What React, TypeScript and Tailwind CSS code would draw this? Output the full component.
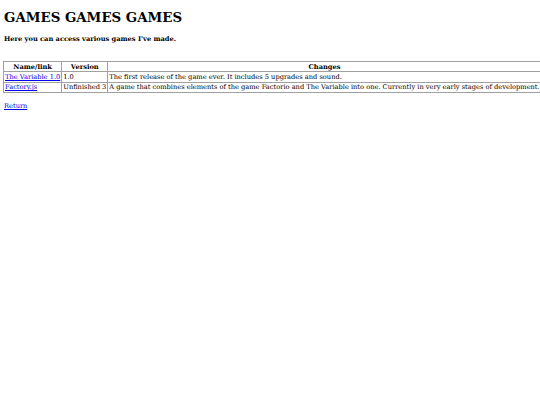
const rows = [
  {
    name: "The Variable 1.0",
    version: "1.0",
    changes: "The first release of the game ever. It includes 5 upgrades and sound.",
  },
  {
    name: "Factory.js",
    version: "Unfinished 3",
    changes:
      "A game that combines elements of the game Factorio and The Variable into one. Currently in very early stages of development.",
  },
];

export default function App() {
  return (
    <main className="min-h-[405px] bg-white px-1 pt-[9px] font-['DejaVu_Serif',serif] text-[6.67px] leading-[8px] text-black">
      <h1 className="text-[13.33px] font-bold leading-[16px]">GAMES GAMES GAMES</h1>
      <p className="mt-[10px] font-bold">Here you can access various games I've made.</p>

      <table className="mt-[18px] w-[538px] -ml-px border-collapse border border-[#a0a0a0] whitespace-nowrap">
        <thead>
          <tr className="h-[10px]">
            <th className="border border-[#a0a0a0] px-[1px] py-0 font-bold">Name/link</th>
            <th className="border border-[#a0a0a0] px-[1px] font-bold">Version</th>
            <th className="border border-[#a0a0a0] px-[1px] font-bold">Changes</th>
          </tr>
        </thead>
        <tbody>
          {rows.map((r) => (
            <tr key={r.name} className="h-[10.5px]">
              <td className="w-[59px] border border-[#a0a0a0] px-[1px] text-left">
                <a href="#" className="text-[#0000ee] underline">
                  {r.name}
                </a>
              </td>
              <td className="w-[45px] border border-[#a0a0a0] px-[1px]">{r.version}</td>
              <td className="border border-[#a0a0a0] px-[1px]">{r.changes}</td>
            </tr>
          ))}
        </tbody>
      </table>

      <p className="mt-[9px]">
        <a href="#" className="text-[#0000ee] underline">
          Return
        </a>
      </p>
    </main>
  );
}
